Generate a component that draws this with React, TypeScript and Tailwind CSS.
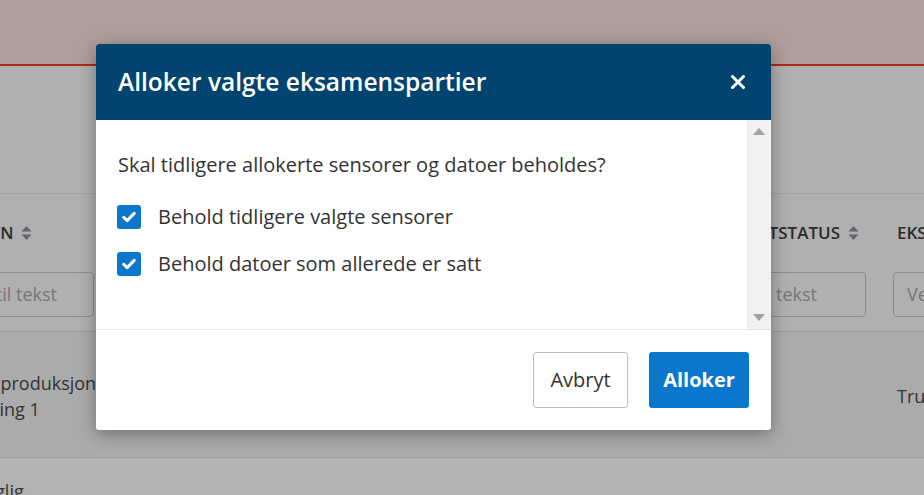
import React from "react";

const font = { fontFamily: '"Open Sans", "Noto Sans", sans-serif' };

function SortIcon() {
  return (
    <svg width="11" height="16" viewBox="0 0 11 16" className="inline-block ml-2 shrink-0">
      <path d="M5.5 1 L10.5 6.5 H0.5 Z" fill="#5f6770" />
      <path d="M5.5 15 L10.5 9.5 H0.5 Z" fill="#5f6770" />
    </svg>
  );
}

function Check() {
  return (
    <div className="w-6 h-6 rounded-[3px] bg-[#0a77cc] flex items-center justify-center shrink-0">
      <svg width="14" height="12" viewBox="0 0 14 12">
        <path d="M1.8 6.4 L5.2 9.6 L12.2 2.4" stroke="#fff" strokeWidth="3" fill="none" strokeLinecap="round" strokeLinejoin="round" />
      </svg>
    </div>
  );
}

export default function App() {
  return (
    <div className="relative w-[924px] h-[495px] overflow-hidden bg-[#b0b0b0]" style={font}>
      {/* background page */}
      <div className="h-[66px] bg-[#b09e9c] border-b-2 border-[#b02a12]" />
      <div className="h-[128px] bg-[#b0b0b0] border-b border-[#a3a3a3]" />
      <div className="flex h-[138px] border-b border-[#999]">
        <div className="w-[144px] shrink-0 flex flex-col -ml-[35px] pr-[15px]">
          <div className="h-[78px] flex items-center text-[17px] font-semibold text-[#2b2b2b] whitespace-nowrap">
            NAVN<SortIcon />
          </div>
          <div className="h-[45px] border border-[#8c8c8c] rounded-[4px] flex items-center justify-end pr-[36px] text-[18px] text-[#777] whitespace-nowrap overflow-hidden">
            Filtrer til tekst
          </div>
        </div>
        <div className="flex-1" />
        <div className="w-[142px] shrink-0 flex flex-col pr-[15px]">
          <div className="h-[78px] flex items-center justify-end pr-[7px] text-[17px] font-semibold text-[#2b2b2b] whitespace-nowrap">
            RESULTATSTATUS<SortIcon />
          </div>
          <div className="h-[45px] border border-[#8c8c8c] rounded-[4px] flex items-center justify-end pr-[48px] text-[18px] text-[#777] whitespace-nowrap overflow-hidden">
            Filtrer til tekst
          </div>
        </div>
        <div className="w-[80px] shrink-0 flex flex-col pl-[12px] -mr-[37px]">
          <div className="h-[78px] flex items-center text-[17px] font-semibold text-[#2b2b2b] whitespace-nowrap pl-[4px]">
            EKSAMENSFORM
          </div>
          <div className="h-[45px] border border-[#8c8c8c] rounded-[4px] flex items-center pl-[13px] text-[18px] text-[#777] whitespace-nowrap overflow-hidden">
            Velg
          </div>
        </div>
      </div>
      <div className="flex h-[126px] bg-[#ababab] border-b border-[#9e9e9e] text-[18px] text-[#333]">
        <div className="w-[110px] shrink-0 flex flex-col justify-center leading-[26px] whitespace-nowrap pt-[2px]">
          <div className="-ml-[84px]">Eksamensproduksjon</div>
          <div className="-ml-[44px]">Ordning 1</div>
        </div>
        <div className="flex-1" />
        <div className="w-[27px] shrink-0 flex items-center whitespace-nowrap pt-[4px]">Trukket</div>
      </div>
      <div className="h-[40px] bg-[#b3b3b3] text-[18px] text-[#333] whitespace-nowrap pt-[20px]">
        <div className="-ml-[28px]">Daglig</div>
      </div>

      {/* modal */}
      <div className="absolute left-[96px] top-[44px] w-[675px] bg-white rounded-[3px] shadow-[0_4px_18px_rgba(0,0,0,0.35)] overflow-hidden">
        <div className="h-[76px] bg-[#00446f] flex items-center justify-between pl-[22px] pr-[25px]">
          <h2 className="text-white text-[24.5px] font-semibold">Alloker valgte eksamenspartier</h2>
          <svg width="16" height="16" viewBox="0 0 16 16">
            <path d="M2.5 2.5 L13.5 13.5 M13.5 2.5 L2.5 13.5" stroke="#fff" strokeWidth="3" strokeLinecap="round" />
          </svg>
        </div>
        <div className="flex h-[210px] border-b border-[#e6e6e6]">
          <div className="flex-1 pl-[21px] pt-[31px] text-[20px] text-[#333]">
            <p className="leading-[28px] ml-[1px]">Skal tidligere allokerte sensorer og datoer beholdes?</p>
            <div className="mt-[26px] flex flex-col gap-[23px]">
              <label className="flex items-center gap-[17px] leading-[24px]">
                <Check />
                <span>Behold tidligere valgte sensorer</span>
              </label>
              <label className="flex items-center gap-[17px] leading-[24px]">
                <Check />
                <span>Behold datoer som allerede er satt</span>
              </label>
            </div>
          </div>
          <div className="w-[24px] bg-[#f1f1f1] flex flex-col items-center justify-between py-[8px]">
            <svg width="12" height="7" viewBox="0 0 12 7"><path d="M6 0 L12 7 H0 Z" fill="#a3a3a3" /></svg>
            <svg width="12" height="7" viewBox="0 0 12 7"><path d="M6 7 L12 0 H0 Z" fill="#a3a3a3" /></svg>
          </div>
        </div>
        <div className="h-[100px] flex items-center justify-end gap-[21px] pr-[22px]">
          <button className="h-[56px] w-[95px] border border-[#bdbdbd] rounded-[3px] bg-white text-[20px] font-medium text-[#333]">
            Avbryt
          </button>
          <button className="h-[56px] w-[100px] rounded-[3px] bg-[#0a77cc] text-[20px] font-bold text-white">
            Alloker
          </button>
        </div>
      </div>
    </div>
  );
}
